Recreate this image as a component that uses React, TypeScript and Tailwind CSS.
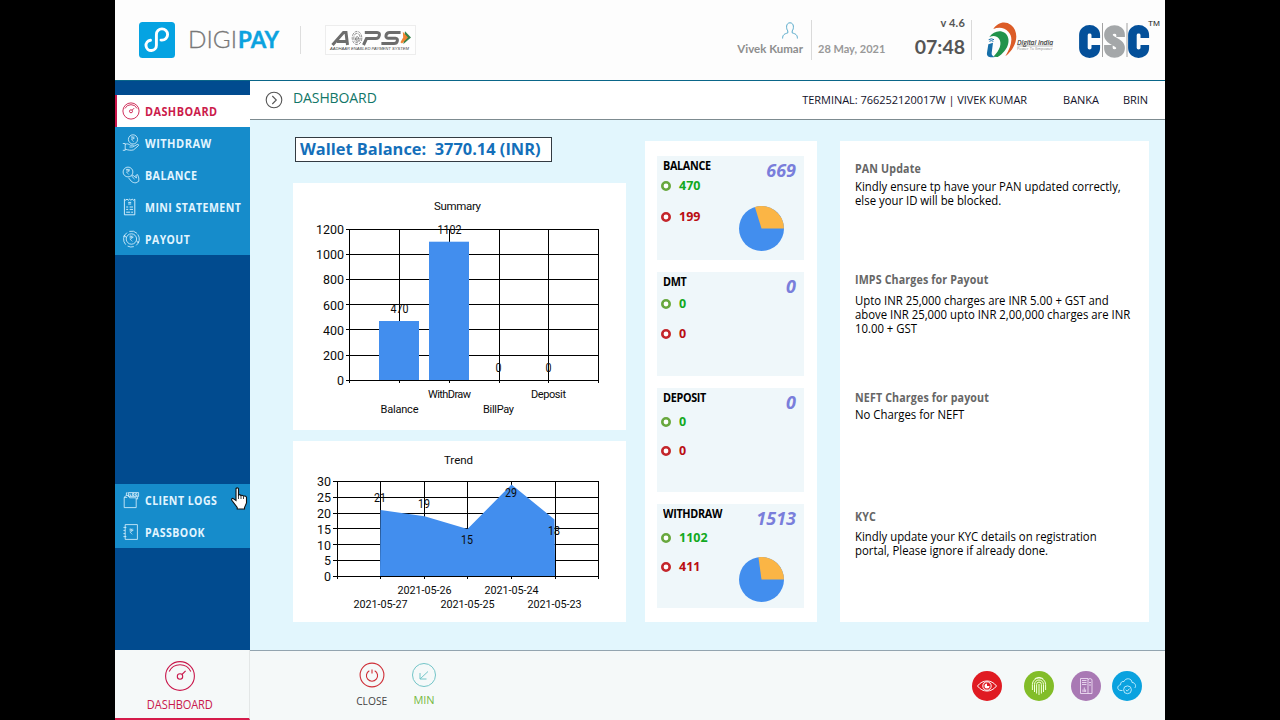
import type { ReactNode } from "react";
import clsx from "clsx";

const INK = "#0b0b0b";
const BLUE = "#428eee";

/* ---------- icons ---------- */

function GaugeIcon({ className }: { className?: string }) {
  return (
    <svg viewBox="0 0 32 32" fill="none" stroke="currentColor" className={className}>
      <circle cx="16" cy="16" r="14.4" />
      <path d="M5.2 11.5a12 12 0 0 1 21.6 0" />
      <circle cx="16" cy="16.5" r="2.7" />
      <path d="M18 14.5l3.6-3.6" />
    </svg>
  );
}

function Rupee({ x, y, s = 1 }: { x: number; y: number; s?: number }) {
  return <path transform={`translate(${x} ${y}) scale(${s})`} d="M0 0h5M0 1.8h5M0 0h1.5c2.6 0 2.6 3.5 0 3.5H.3L3.6 7" />;
}

function WithdrawIcon() {
  return (
    <svg viewBox="0 0 18 18" fill="none" stroke="currentColor" strokeWidth=".8" className="h-[18px] w-[18px] shrink-0">
      <circle cx="11" cy="5.4" r="4.6" />
      <Rupee x={9.2} y={3} s={0.7} />
      <path d="M.8 9.5h2.4v6.8H.8M3.2 10.5c2-1.2 3.5-.6 5 .7h2.3c1.4 0 1.4 1.8 0 1.8H7.4M11.6 12.5l3.4-2c1.4-.6 2.2.6 1.1 1.5l-4.5 3.8c-2 .9-5.6.3-8.4-.6" />
    </svg>
  );
}

function BalanceIcon() {
  return (
    <svg viewBox="0 0 18 18" fill="none" stroke="currentColor" strokeWidth=".8" className="h-[18px] w-[18px] shrink-0">
      <circle cx="6" cy="6" r="4.9" />
      <Rupee x={4.2} y={3.4} s={0.75} />
      <path d="M6.5 11.8l2.6 3.2c1 1.3 3.2 2 5 1.8l2.7-1.6V12l-1.2-3.4-1.8.8.7 2.6-3.4-2.6c-1.1-.6-1.8.5-1 1.3l2.4 2.3" />
    </svg>
  );
}

function StatementIcon() {
  return (
    <svg viewBox="0 0 18 18" fill="none" stroke="currentColor" strokeWidth=".9" className="h-[18px] w-[18px] shrink-0">
      <path d="M2.4 1.2v15.6h10.4V1.2l-1.3 1-1.3-1-1.3 1-1.3-1-1.3 1-1.3-1-1.3 1z" />
      <path d="M6.2 4.4h3M6.2 6h3M4.2 9h2M7.6 9h3.4M4.2 11.4h2M7.6 11.4h3.4M4.2 14.2h4M9.2 14.2H11" />
    </svg>
  );
}

function PayoutIcon() {
  return (
    <svg viewBox="0 0 18 18" fill="none" stroke="currentColor" strokeWidth=".8" className="h-[18px] w-[18px] shrink-0">
      <circle cx="9.4" cy="9" r="5.2" />
      <path d="M3.7 14.6A8 8 0 0 1 5 2.6M7.3 1.4a8 8 0 0 1 7.8 2M15.8 4.4a8 8 0 0 1-1.6 11M11.8 16.6a8 8 0 0 1-6.2-.5M1.2 6.4l1.8-.8.7 1.7M17.2 11.8l-1.6.7-.8-1.8" />
      <Rupee x={7.6} y={6.2} s={0.75} />
    </svg>
  );
}

function LogsIcon() {
  return (
    <svg viewBox="0 0 18 18" fill="none" stroke="currentColor" strokeWidth=".8" className="h-[18px] w-[18px] shrink-0">
      <path d="M5.2 6.4H2.2v10.2h12V6.8H7.6L6.4 4.6H4.2L2 6.4M4.4 4.6V1.8h1.2M15.6 6V8h-1.2" />
      <path d="M6.4 1.6h10.2v3.8H6.4z" />
      <path d="M8 2.6v1.8h1.2M10.4 2.6h1.6v1.8h-1.6zM15.2 2.7h-1.6v1.7h1.6v-.8" />
    </svg>
  );
}

function PassbookIcon() {
  return (
    <svg viewBox="0 0 18 18" fill="none" stroke="currentColor" strokeWidth=".8" className="h-[18px] w-[18px] shrink-0">
      <path d="M3.2 1.6h12.2v14.8H3.2zM1.4 4.4h3M1.4 7.4h1.8M1.4 10.6h1.8M1.4 13.6h3" />
      <Rupee x={7.6} y={6.2} s={0.75} />
    </svg>
  );
}

function Ring({ className }: { className: string }) {
  return (
    <svg viewBox="0 0 10 10" className={clsx("h-2.5 w-2.5", className)}>
      <circle cx="5" cy="5" r="3.700" fill="#fff" stroke="currentColor" strokeWidth="2.600" />
    </svg>
  );
}

function PieChart({ failed, total }: { failed: number; total: number }) {
  const angle = (failed / total) * Math.PI * 2;
  const x = 22.5 + 22.5 * Math.cos(angle);
  const y = 22.5 - 22.5 * Math.sin(angle);
  return (
    <svg viewBox="0 0 45 45" className="h-[45px] w-[45px]">
      <circle cx="22.5" cy="22.5" r="22.5" fill={BLUE} />
      <path d={`M22.5 22.5H45A22.5 22.5 0 0 0 ${x} ${y}z`} fill="#fbb545" />
    </svg>
  );
}

/* ---------- header ---------- */

function DigipayLogo() {
  return (
    <div className="flex">
      <svg viewBox="0 0 36 36" className="h-9 w-9">
        <rect width="36" height="36" rx="3.5" fill="#05a3e2" />
        <path
          d="M11.500 18.200a5.200 5.200 0 1 0 5.900 5V12.600a5.600 5.600 0 1 1 5.600 5.500h-1"
          fill="none"
          stroke="#fff"
          strokeWidth="2.900"
          strokeLinecap="round"
        />
      </svg>
      <svg viewBox="0 0 96 36" className="ml-3 h-9 w-24 font-['Lato',sans-serif]">
        <text x="1" y="26.300" fontSize="24" fontWeight="300" fill="#777" stroke="#777" strokeWidth=".3" textLength="49" lengthAdjust="spacingAndGlyphs">DIGI</text>
        <text x="51" y="26.300" fontSize="23.500" fontWeight="700" fill="#0ba2df" stroke="#0ba2df" strokeWidth=".4" textLength="41" lengthAdjust="spacingAndGlyphs">PAY</text>
      </svg>
    </div>
  );
}

function AepsLogo() {
  return (
    <svg viewBox="0 0 91 30" className="mt-[3px] ml-[24px] h-[30px] w-[91px] font-['Liberation_Sans',sans-serif]">
      <rect x=".5" y=".5" width="90" height="29" fill="#fefefe" stroke="#ededed" />
      <g fill="none" stroke="#6d6d6d" strokeWidth="3">
        <path d="M7.500 20L18.500 7.500h2.500L22.500 20M12 16.500h9" />
        <path d="M38.500 20l3-6.400h9.400c3.600 0 5.200-6.200 1.200-6.200H39.800" />
        <path d="M75.600 7.400h-11c-4 0-5 5.800-1.600 5.800h7.500c3.200 0 2.200 5.400-1.500 5.400H56.400" />
      </g>
      <g fill="none" stroke="#777" strokeWidth=".8">
        <ellipse cx="32" cy="13" rx="4.8" ry="6.6" strokeDasharray="3 1" />
        <ellipse cx="32" cy="13" rx="3.2" ry="4.8" strokeDasharray="4 1" />
        <path d="M30.4 14h3.4c0-3-3.2-3-3.2 0 0 2.400 2 2.600 3.200 1.600" strokeWidth="1" />
      </g>
      <path d="M80 6.200l6 6.400-7.600 6.400z" fill="#338149" />
      <path d="M77.800 6.800l5.200 5.800-6 5.800-1.600-1.200 2.800-4.600z" fill="#ef8432" />
      <text x="5" y="25" fontSize="4" fontStyle="italic" fill="#444" textLength="79" lengthAdjust="spacingAndGlyphs">AADHAAR ENABLED PAYMENT SYSTEM</text>
    </svg>
  );
}

function DigitalIndiaLogo() {
  return (
    <svg viewBox="798 64 204 114" className="mt-[21px] ml-[14px] h-[38px] w-[68px] font-['Open_Sans',sans-serif]">
      <path d="M820 88c12-20 36-26 53-12 26 20 20 66-17 94 20-33 24-59 9-74-11-12-27-15-45-8z" fill="#dc5c27" />
      <path d="M808 112c12-17 32-23 47-12 19 15 13 51-22 72l-13-1c19-19 27-40 17-54-7-9-17-10-29-5z" fill="#21934b" />
      <path d="M805 134l14-5-4 31c-1 7 4 10 10 12-16 3-26-1-24-13z" fill="#176fa9" />
      <path d="M806 120q8-5 16 0M808 125q6-4 12 0" fill="none" stroke="#176fa9" strokeWidth="3" />
      <text x="891" y="136" fontSize="20" fontStyle="italic" fill="#333" stroke="#333" strokeWidth=".5" textLength="108" lengthAdjust="spacingAndGlyphs">Digital India</text>
      <path d="M892 139h107" stroke="#777" strokeWidth="1.500" />
      <text x="891" y="150" fontSize="12" fill="#888" textLength="107" lengthAdjust="spacingAndGlyphs">Power To Empower</text>
    </svg>
  );
}

function CscLogo() {
  return (
    <svg viewBox="0 0 86 44" className="mt-[17px] ml-[25px] h-11 w-[86px]">
      <g fill="none" strokeWidth="8.600">
        <path d="M16.800 21v-3c0-7.600-12.400-7.600-12.400 0v13c0 7.600 12.400 7.600 12.400 0v-3" stroke="#04509a" />
        <path d="M41.600 20v-2c0-7.400-12.200-7.400-12.200 0 0 6 12.200 7 12.200 13 0 7.400-12.200 7.400-12.200 0v-3" stroke="#a4a7a9" />
        <path d="M65.800 21v-3c0-7.600-12.400-7.600-12.400 0v13c0 7.600 12.400 7.600 12.400 0v-3" stroke="#04509a" />
      </g>
      <path d="M23.500 6v34M48 6v34" stroke="#8a8a8a" strokeWidth=".8" />
      <text x="69" y="9" fontSize="8" fill="#222" fontFamily="Liberation Sans, sans-serif" textLength="12" lengthAdjust="spacingAndGlyphs">TM</text>
    </svg>
  );
}

function Header() {
  return (
    <header className="flex h-[81px] border-b border-[#0a6689] bg-[#fdfdfd] font-['Lato',sans-serif]">
      <div className="flex pt-[22px] pl-6">
        <DigipayLogo />
        <div className="mt-1 ml-[17px] h-[28px] w-px bg-[#dedede]" />
        <AepsLogo />
      </div>
      <div className="ml-auto flex">
        <div className="flex w-[76px] flex-col items-end pt-[22px] pr-[8px] text-[#8e8e8e]">
          <svg viewBox="0 0 16 17" fill="none" stroke="#58aacb" className="mr-[5px] h-[17px] w-4">
            <path d="M.6 16.500c0-4 2-4.600 5.200-5.600v-2C4 6.800 3.800.8 8 .8s4 6 2.200 8.100v2c3.200 1 5.200 1.600 5.200 5.600" />
          </svg>
          <span className="mt-[2px] text-[11.500px] leading-4 font-bold whitespace-nowrap">Vivek Kumar</span>
        </div>
        <div className="mt-5 h-10 w-px bg-[#dadada]" />
        <span className="mt-[41px] ml-[6px] w-[90px] text-[11px] leading-4 font-bold whitespace-nowrap text-[#999]">
          28 May, 2021
        </span>
        <div className="flex w-[63px] flex-col items-end pr-[6px] text-[#555]">
          <span className="mt-[15px] text-[11px] leading-[15px] font-bold tracking-[0.2px] whitespace-nowrap">v 4.6</span>
          <span className="mt-[5px] text-[19.500px] leading-6 font-bold">07:48</span>
        </div>
        <div className="mt-5 h-10 w-px bg-[#dadada]" />
        <DigitalIndiaLogo />
        <CscLogo />
      </div>
    </header>
  );
}

/* ---------- sidebar ---------- */

interface MenuItem {
  label: string;
  icon: ReactNode;
  scale: string;
  active?: boolean;
}

const menuItems: MenuItem[] = [
  { label: "DASHBOARD", icon: <GaugeIcon className="h-[18px] w-[18px] shrink-0 stroke-[1.6]" />, scale: "scale-x-[0.905]", active: true },
  { label: "WITHDRAW", icon: <WithdrawIcon />, scale: "scale-x-[0.92]" },
  { label: "BALANCE", icon: <BalanceIcon />, scale: "scale-x-[0.89]" },
  { label: "MINI STATEMENT", icon: <StatementIcon />, scale: "scale-x-[0.88]" },
  { label: "PAYOUT", icon: <PayoutIcon />, scale: "scale-x-[0.87]" },
];

const logItems: MenuItem[] = [
  { label: "CLIENT LOGS", icon: <LogsIcon />, scale: "scale-x-[0.88]" },
  { label: "PASSBOOK", icon: <PassbookIcon />, scale: "scale-x-[0.88]" },
];

function MenuRow({ item }: { item: MenuItem }) {
  return (
    <li
      className={clsx(
        "flex h-8 items-center gap-[5px] border-l-2 pl-[5px]",
        item.active ? "border-[#c9134a] bg-white text-[#cb1b4b]" : "border-[#168ccb] bg-[#168ccb] text-[#e2f5ff]",
      )}
    >
      {item.icon}
      <span className={clsx("mt-[2px] origin-left text-[12px] leading-4 font-bold tracking-[0.5px] whitespace-nowrap", item.scale)}>
        {item.label}
      </span>
    </li>
  );
}

function Sidebar() {
  return (
    <nav className="w-[135px] shrink-0 bg-[#014b8f] pt-[14px] font-['Open_Sans',sans-serif]">
      <ul>
        {menuItems.map((item) => (
          <MenuRow key={item.label} item={item} />
        ))}
      </ul>
      <ul className="mt-[229px]">
        {logItems.map((item) => (
          <MenuRow key={item.label} item={item} />
        ))}
      </ul>
    </nav>
  );
}

/* ---------- charts ---------- */

const summaryBars = [
  { label: "Balance", value: 470, x: 106.5, valueY: 130, labelY: 230, w: 38 },
  { label: "WithDraw", value: 1102, x: 156.5, valueY: 51, labelY: 215, w: 43 },
  { label: "BillPay", value: 0, x: 205.5, valueY: 189, labelY: 230, w: 31 },
  { label: "Deposit", value: 0, x: 255.5, valueY: 189, labelY: 215, w: 35 },
];

function AxisLabel({ x, y, value }: { x: number; y: number; value: number }) {
  return (
    <text x={x} y={y} fontSize="13.600" textAnchor="end" textLength={String(value).length * 7} lengthAdjust="spacingAndGlyphs">
      {value}
    </text>
  );
}

function SummaryChart() {
  const ticks = [1200, 1000, 800, 600, 400, 200, 0];
  return (
    <svg viewBox="0 0 333 247" className="block h-[247px] w-[333px] bg-white font-['Roboto',sans-serif]" fill={INK}>
      <text x="164.500" y="27" fontSize="11.500" textAnchor="middle" textLength="47">Summary</text>
      <g stroke="#000" shapeRendering="crispEdges">
        {ticks.map((tick, i) => (
          <path key={tick} d={`M53 ${Math.round(46 + i * 25.1) + 0.5}H306`} />
        ))}
        {[56.5, 106.5, 156.5, 206.5, 255.5, 305.5].map((x) => (
          <path key={x} d={`M${x} 46V200`} />
        ))}
      </g>
      {ticks.map((tick, i) => (
        <AxisLabel key={tick} x={51} y={51.2 + i * 25.1} value={tick} />
      ))}
      {summaryBars.map((bar) => (
        <g key={bar.label}>
          <rect x={bar.x - 20.5} y={197 - bar.value * 0.1255} width="40" height={bar.value * 0.1255} fill={BLUE} />
          <text x={bar.x} y={bar.valueY} fontSize="12" textAnchor="middle" textLength={String(bar.value).length * 6} lengthAdjust="spacingAndGlyphs">{bar.value}</text>
          <text x={bar.x} y={bar.labelY} fontSize="11" textAnchor="middle" textLength={bar.w}>{bar.label}</text>
        </g>
      ))}
    </svg>
  );
}

const trendPoints = [
  { date: "2021-05-27", value: 21, x: 87.5, valueY: 61, labelY: 167 },
  { date: "2021-05-26", value: 19, x: 131.5, valueY: 67, labelY: 153 },
  { date: "2021-05-25", value: 15, x: 174.5, valueY: 103, labelY: 167 },
  { date: "2021-05-24", value: 29, x: 218.5, valueY: 56, labelY: 153 },
  { date: "2021-05-23", value: 18, x: 261.5, valueY: 94, labelY: 167 },
];

function TrendChart() {
  const ticks = [30, 25, 20, 15, 10, 5, 0];
  const area = trendPoints.map((p) => `${p.x},${135.5 - p.value * 3.17}`).join(" ");
  return (
    <svg viewBox="0 0 333 181" className="block h-[181px] w-[333px] bg-white font-['Roboto',sans-serif]" fill={INK}>
      <text x="165.500" y="23" fontSize="11.500" textAnchor="middle">Trend</text>
      <g stroke="#000" shapeRendering="crispEdges">
        {ticks.map((tick, i) => (
          <path key={tick} d={`M40 ${Math.round(40 + i * 15.83) + 0.5}H306`} />
        ))}
        {[44.5, 87.5, 131.5, 174.5, 218.5, 262.5, 305.5].map((x) => (
          <path key={x} d={`M${x} 40V138`} />
        ))}
      </g>
      <polygon points={`87,135 ${area} 262,118 262,135`} fill={BLUE} />
      {ticks.map((tick, i) => (
        <AxisLabel key={tick} x={38} y={45.3 + i * 15.83} value={tick} />
      ))}
      {trendPoints.map((p) => (
        <g key={p.date}>
          <text x={p.x - 0.5} y={p.valueY} fontSize="12" textAnchor="middle" textLength="12" lengthAdjust="spacingAndGlyphs">{p.value}</text>
          <text x={p.x} y={p.labelY} fontSize="10.800" textAnchor="middle" textLength="54">{p.date}</text>
        </g>
      ))}
    </svg>
  );
}

/* ---------- statistics ---------- */

const stats = [
  { title: "BALANCE", total: 669, success: 470, failed: 199, successGap: "mt-[4px]", failedGap: "mt-[15px]", pieGap: "mt-[25px]" },
  { title: "DMT", total: 0, success: 0, failed: 0, successGap: "mt-[6px]", failedGap: "mt-[14px]", pieGap: "" },
  { title: "DEPOSIT", total: 0, success: 0, failed: 0, successGap: "mt-[8px]", failedGap: "mt-[13px]", pieGap: "" },
  { title: "WITHDRAW", total: 1513, success: 1102, failed: 411, successGap: "mt-[8px]", failedGap: "mt-[13px]", pieGap: "mt-[28px]" },
];

function StatCard({ stat }: { stat: (typeof stats)[number] }) {
  return (
    <section className="flex h-[104px] justify-between bg-[#eff7fa] font-bold">
      <div>
        <h3 className="mt-[2px] ml-[6px] origin-left scale-x-[0.9] text-[12px] leading-4 tracking-[-0.35px] text-black">{stat.title}</h3>
        <p className={clsx("ml-1 flex h-4 items-center gap-2 text-[12.500px] text-[#12a921]", stat.successGap)}>
          <Ring className="text-[#68a83e]" />
          {stat.success}
        </p>
        <p className={clsx("ml-1 flex h-4 items-center gap-2 text-[12.500px] text-[#ba0d12]", stat.failedGap)}>
          <Ring className="text-[#c4262b]" />
          {stat.failed}
        </p>
      </div>
      <div className="flex flex-col items-end">
        <span className="mt-[4px] mr-[8px] text-[18px] leading-[21px] text-[#7a7edb] italic">{stat.total}</span>
        {stat.total > 0 && (
          <div className={clsx("mr-5", stat.pieGap)}>
            <PieChart failed={stat.failed} total={stat.total} />
          </div>
        )}
      </div>
    </section>
  );
}

/* ---------- notices ---------- */

const notices = [
  {
    title: "PAN Update",
    lines: ["Kindly ensure tp have your PAN updated correctly,", "else your ID will be blocked."],
    height: "h-[111px]",
    gap: "mt-[4px]",
  },
  {
    title: "IMPS Charges for Payout",
    lines: ["Upto INR 25,000 charges are INR 5.00 + GST and", "above INR 25,000 upto INR 2,00,000 charges are INR", "10.00 + GST"],
    height: "h-[118px]",
    gap: "mt-[7px]",
  },
  { title: "NEFT Charges for payout", lines: ["No Charges for NEFT"], height: "h-[119px]", gap: "mt-[3px]" },
  {
    title: "KYC",
    lines: ["Kindly update your KYC details on registration", "portal, Please ignore if already done."],
    height: "h-[80px]",
    gap: "mt-[6px]",
  },
];

function Notices() {
  return (
    <aside className="ml-[23px] h-[481px] w-[309px] bg-white pt-[21px] pl-[15px] whitespace-nowrap">
      {notices.map((notice) => (
        <article key={notice.title} className={notice.height}>
          <h3 className="origin-left scale-x-[0.89] text-[12px] leading-[14px] font-bold tracking-[0.15px] text-[#666]">{notice.title}</h3>
          <p className={clsx("origin-left scale-x-[0.945] text-[12px] leading-[14px] text-black", notice.gap)}>
            {notice.lines.map((line) => (
              <span key={line} className="block">{line}</span>
            ))}
          </p>
        </article>
      ))}
    </aside>
  );
}

/* ---------- footer ---------- */

function Footer() {
  return (
    <footer className="flex h-[70px] bg-[#f5f9f9]">
      <div className="flex w-[135px] flex-col items-center border-r border-b-2 border-r-[#e3e7e7] border-b-[#d51b4b] pt-[10px] pr-[4px] text-[#c9184c]">
        <GaugeIcon className="h-8 w-8 stroke-[1.1]" />
        <span className="mt-[5px] scale-x-[0.92] text-[12px] leading-4 tracking-[-0.1px]">DASHBOARD</span>
      </div>
      <div className="flex flex-1 border-t border-[#93a5b0]">
        <div className="ml-[104px] flex w-9 flex-col items-center pt-[11px] text-[#444]">
          <svg viewBox="0 0 26 26" fill="none" stroke="#cf3038" strokeWidth="1.1" className="h-[26px] w-[26px]">
            <circle cx="13" cy="13" r="11.9" />
            <path d="M13 7.500v4M10.300 8.700a5.600 5.600 0 1 0 5.400 0" />
          </svg>
          <span className="mt-[5px] scale-x-[0.93] text-[11px] leading-4">CLOSE</span>
        </div>
        <div className="ml-4 flex w-9 flex-col items-center pt-[11px] text-[#77b943]">
          <svg viewBox="0 0 26 26" fill="none" stroke="#73c5c8" strokeWidth="1" className="h-[26px] w-[26px]">
            <circle cx="13" cy="13" r="11.500" />
            <path d="M17 9.500L9 17M9 11v6h6.500" />
          </svg>
          <span className="mt-[4px] text-[11px] leading-4">MIN</span>
        </div>
        <div className="mt-5 mr-[23px] ml-auto flex">
          <svg viewBox="0 0 30 30" fill="none" stroke="#fff" className="h-[30px] w-[30px]">
            <circle cx="15" cy="15" r="15" fill="#e01b22" stroke="none" />
            <path d="M5.500 15c5-6.700 14-6.700 19 0-5 6.700-14 6.700-19 0z" />
            <circle cx="15" cy="15" r="4.200" />
            <path d="M15 12.500a2.500 2.500 0 1 0 2.500 2.500H15z" fill="#fff" stroke="none" />
          </svg>
          <svg viewBox="0 0 30 30" fill="none" stroke="#f3ffdf" strokeWidth="1" className="ml-[22px] h-[30px] w-[30px]">
            <circle cx="15" cy="15" r="15" fill="#82bd28" stroke="none" />
            <path d="M8.400 19v-5.500a6.600 6.600 0 0 1 13.200 0V19M10.500 21v-7.500a4.500 4.500 0 0 1 9 0V21M12.600 22.500v-9a2.400 2.400 0 0 1 4.800 0v9M15 13v11M10.800 7.600q4.200-2.600 8.400 0" />
          </svg>
          <svg viewBox="0 0 30 30" fill="none" stroke="#eddcf3" strokeWidth=".9" className="ml-[17px] h-[30px] w-[30px]">
            <circle cx="15" cy="15" r="15" fill="#a979b4" stroke="none" />
            <path d="M9.500 7.500h7.500v15H9.500zM17 8.500q2-2 4 0v14h-4M11 9.500h4.500M11 11.500h4.500M11 13.500h4.500M18 11.500h2M18 14h2M12 21v-2.500M13.300 21v-4.500M14.600 21v-2.500" />
          </svg>
          <svg viewBox="0 0 30 30" fill="none" stroke="#c8efff" strokeWidth=".9" className="ml-[11px] h-[30px] w-[30px]">
            <circle cx="15" cy="15" r="15" fill="#0aa2df" stroke="none" />
            <path d="M10.500 19.500H9c-4 0-4.400-5-.5-5.700 0-3 2.200-3.800 3.500-3.200 1.300-4.200 8-3.600 8 .900 3-.2 4.700 3.500 2.700 5.500" />
            <circle cx="15.500" cy="18.800" r="3.900" />
            <path d="M13.800 18.700l1.400 1.500 2.300-2.600" />
          </svg>
        </div>
      </div>
    </footer>
  );
}

export default function App() {
  return (
    <div className="flex h-[720px] w-[1280px] justify-center overflow-hidden bg-black">
      <div className="relative flex w-[1050px] flex-col bg-white font-['Open_Sans',sans-serif]">
        <Header />
        <div className="flex h-[569px]">
          <Sidebar />
          <main className="flex flex-1 flex-col bg-[#e2f6fd]">
            <div className="flex h-[39px] items-start border-b border-[#7d8b90] bg-white whitespace-nowrap">
              <svg viewBox="0 0 18 18" fill="none" stroke="#555" strokeWidth="1.100" className="mt-[10px] ml-[15px] h-[18px] w-[18px]">
                <circle cx="9" cy="9" r="7.800" />
                <path d="M7.300 5l4 4-4 4" />
              </svg>
              <h1 className="mt-[8px] ml-[10px] text-[14px] leading-[18px] tracking-[-0.1px] text-[#117668]">DASHBOARD</h1>
              <div className="mt-[11px] mr-[17px] ml-auto flex text-[11px] leading-4 tracking-[-0.04px] text-[#12122a]">
                <span>TERMINAL: 766252120017W | VIVEK KUMAR</span>
                <span className="ml-9">BANKA</span>
                <span className="ml-6">BRIN</span>
              </div>
            </div>
            <div className="flex pl-[43px]">
              <div className="w-[333px]">
                <div className="mt-[17px] ml-[2px] flex h-[25px] w-[257px] items-center border border-[#333b42] bg-white pl-[4px] text-[16.400px] font-bold whitespace-pre text-[#146fba]">
                  Wallet Balance:  3770.14 (INR)
                </div>
                <div className="mt-[21px] flex flex-col gap-[11px]">
                  <SummaryChart />
                  <TrendChart />
                </div>
              </div>
              <div className="mt-[21px] ml-[19px] flex h-[481px] w-[172px] flex-col gap-3 bg-white px-3 pt-[15px] pr-[13px]">
                {stats.map((stat) => (
                  <StatCard key={stat.title} stat={stat} />
                ))}
              </div>
              <div className="mt-[21px]">
                <Notices />
              </div>
            </div>
          </main>
        </div>
        <Footer />
        {/* pointer over the sidebar */}
        <svg viewBox="0 0 17 24" className="absolute top-[487px] left-[116px] h-[24px] w-[17px]">
          <path
            d="M5 1.500Q6.300.2 7.500 1.500V8q1-1 2.500.5 1.200-.8 2.500.7 2-.7 3 1V16l-2 4.500V22H6.200v-1.500L1 13.500q-1-1.800.8-2.200L5 13.500z"
            fill="#fff"
            stroke="#111"
            strokeWidth="1.100"
          />
          <path d="M7.500 8v4M10 8.500V12M12.500 9.500V12" stroke="#111" strokeWidth=".8" />
        </svg>
      </div>
    </div>
  );
}
